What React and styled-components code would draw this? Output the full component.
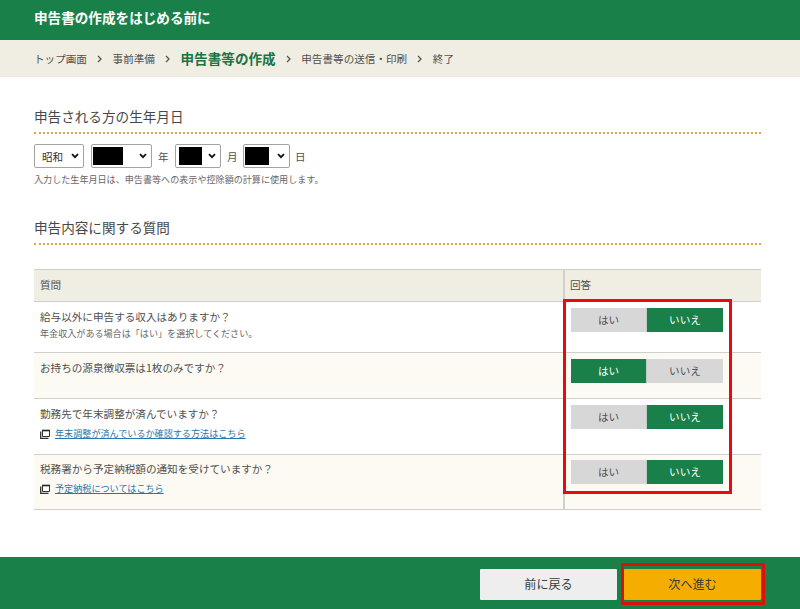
import React, { useState } from 'react';
import styled, { createGlobalStyle } from 'styled-components';

const GlobalStyle = createGlobalStyle`
  * {
    box-sizing: border-box;
  }
  body {
    margin: 0;
    background: #fff;
    color: #505050;
    font-family: "Noto Sans CJK JP", "Noto Sans", sans-serif;
    font-size: 10.6px;
    font-weight: 400;
  }
`;

const Page = styled.div`
  width: 800px;
  height: 609px;
  display: flex;
  flex-direction: column;
  overflow: hidden;
`;

const Header = styled.header`
  height: 40px;
  padding: 0 34px 6px;
  display: flex;
  align-items: center;
  background: #19804a;
`;

const Title = styled.h1`
  margin: 0;
  color: #fff;
  font-size: 13.6px;
  font-weight: 700;
  line-height: 20px;
`;

const Steps = styled.nav`
  height: 37px;
  padding: 0 34px;
  display: flex;
  align-items: center;
  background: #f0eee3;
`;

const Step = styled.span`
  padding-bottom: ${props => props.$current ? '2px' : 0};
  color: ${props => props.$current ? '#1a7443' : '#505050'};
  font-size: ${props => props.$current ? '13.6px' : '10.6px'};
  font-weight: ${props => props.$current ? 700 : 400};
  line-height: 20px;
`;

const StepArrow = styled.svg`
  width: 5px;
  height: 8px;
  margin: 1px 10.6px 0 10px;
`;

const Content = styled.main`
  flex: 1;
  padding: 0 39px 0 34px;
`;

const SectionTitle = styled.h2`
  height: ${props => props.$height};
  margin: 0;
  padding-bottom: 5px;
  display: flex;
  align-items: flex-end;
  border-bottom: 2px dotted #d9a93f;
  color: #484848;
  font-size: 13.6px;
  font-weight: 400;
  line-height: 22px;
`;

const BirthRow = styled.div`
  margin-top: 10px;
  display: flex;
  align-items: center;
`;

const SelectBox = styled.button`
  width: ${props => props.$width};
  height: 24px;
  padding: 0 4px 0 ${props => props.$left || '1px'};
  display: flex;
  align-items: center;
  justify-content: space-between;
  border: 1px solid #a3a3a3;
  border-radius: 2px;
  background: #fff;
  color: #333;
  font: inherit;
`;

const Mask = styled.span`
  width: ${props => props.$width};
  height: 18px;
  background: #000;
`;

const Unit = styled.span`
  width: ${props => props.$width};
  padding-left: ${props => props.$left || '6px'};
`;

const Note = styled.p`
  margin: 0;
  color: #666;
  font-size: 9.08px;
  line-height: ${props => props.$line || '16px'};
`;

const TableArea = styled.div`
  position: relative;
  margin-top: 24px;
`;

const Table = styled.div`
  border-top: 1px solid #cfcfcb;
`;

const Row = styled.div`
  height: ${props => props.$height};
  display: grid;
  grid-template-columns: 529px 1fr;
  border-bottom: 1px solid #cfcfcb;
  background: ${props => props.$bg || '#fff'};
`;

const HeadCell = styled.div`
  padding: 7px 6px 0;
  line-height: 16px;
  & + & {
    padding-left: 5px;
    border-left: 2px solid #cfcfcb;
  }
`;

const Question = styled.div`
  padding: ${props => props.$top || '7px'} 6px 0;
  line-height: 16px;
`;

const Answer = styled.div`
  padding: ${props => props.$top || '6px'} 6px 0;
  border-left: 2px solid #cfcfcb;
`;

const Choices = styled.div`
  width: 152px;
  display: flex;
  gap: 1px;
  background: #c4c9c4;
`;

const Choice = styled.button`
  width: ${props => props.$width};
  height: 24px;
  padding: 0;
  border: 0;
  background: ${props => props.$on ? '#19804a' : '#d7d7d7'};
  color: ${props => props.$on ? '#fff' : '#505050'};
  font: inherit;
  line-height: 24px;
`;

const HelpLine = styled.div`
  margin-top: 3px;
  display: flex;
  align-items: center;
  gap: 5px;
`;

const WindowIcon = styled.svg`
  width: 10px;
  height: 10px;
  margin-top: 2px;
`;

const HelpLink = styled.a`
  color: #2a76ab;
  font-size: 9.1px;
  line-height: 16px;
  text-decoration: underline;
  text-underline-offset: 1px;
`;

const Footer = styled.footer`
  height: 52px;
  padding: 12px 39px 0 0;
  display: flex;
  justify-content: flex-end;
  align-items: flex-start;
  gap: 7px;
  background: #19804a;
`;

const NavSlot = styled.div`
  position: relative;
`;

const NavButton = styled.button`
  width: 137px;
  height: 31px;
  padding: 0;
  display: block;
  border: 0;
  border-radius: 1px;
  background: ${props => props.$primary ? '#f5ae00' : '#eee'};
  color: #3a3a3a;
  font: inherit;
  font-size: 12.1px;
  line-height: 29px;
  padding-bottom: 2px;
`;

// red outline laid over the parts the guide points at
const Marker = styled.div`
  position: absolute;
  top: ${props => props.$top};
  left: ${props => props.$left};
  width: ${props => props.$width};
  height: ${props => props.$height};
  border: 3px solid ${props => props.$color || '#e80a0d'};
  pointer-events: none;
`;

const steps = ['トップ画面', '事前準備', '申告書等の作成', '申告書等の送信・印刷', '終了'];

const questions = [
  { text: '給与以外に申告する収入はありますか？', note: '年金収入がある場合は「はい」を選択してください。', height: '51px' },
  { text: 'お持ちの源泉徴収票は1枚のみですか？', height: '46px', bg: '#fcfaf3' },
  { text: '勤務先で年末調整が済んでいますか？', link: '年末調整が済んでいるか確認する方法はこちら', height: '56px' },
  { text: '税務署から予定納税額の通知を受けていますか？', link: '予定納税についてはこちら', height: '55px', bg: '#fcfaf3', top: '6px', answerTop: '5px' },
];

const Chevron = () => (
  <svg width="8" height="6" viewBox="0 0 8 6">
    <path d="M1 1.2 4 4.2 7 1.2" fill="none" stroke="#111" strokeWidth="1.8" />
  </svg>
);

const App = () => {
  const [answers, setAnswers] = useState([false, true, false, false]);

  const choose = (index, value) => {
    setAnswers(answers.map((a, i) => (i === index ? value : a)));
  };

  return (
    <>
      <GlobalStyle />
      <Page>
        <Header>
          <Title>申告書の作成をはじめる前に</Title>
        </Header>
        <Steps>
          {steps.map((step, i) => (
            <React.Fragment key={step}>
              {i > 0 && (
                <StepArrow viewBox="0 0 5 8">
                  <path d="M1 1 4 4 1 7" fill="none" stroke="#555" strokeWidth="1.3" />
                </StepArrow>
              )}
              <Step $current={i === 2}>{step}</Step>
            </React.Fragment>
          ))}
        </Steps>
        <Content>
          <SectionTitle $height="57px">申告される方の生年月日</SectionTitle>
          <BirthRow>
            <SelectBox $width="50px" $left="7px">昭和<Chevron /></SelectBox>
            <Unit $width="7px" />
            <SelectBox $width="61px"><Mask $width="30px" /><Chevron /></SelectBox>
            <Unit $width="23px">年</Unit>
            <SelectBox $width="46px" $left="3px"><Mask $width="23px" /><Chevron /></SelectBox>
            <Unit $width="22px">月</Unit>
            <SelectBox $width="47px"><Mask $width="24px" /><Chevron /></SelectBox>
            <Unit $width="20px" $left="5px">日</Unit>
          </BirthRow>
          <Note $line="23px">入力した生年月日は、申告書等への表示や控除額の計算に使用します。</Note>
          <SectionTitle $height="54px">申告内容に関する質問</SectionTitle>
          <TableArea>
            <Table>
              <Row $height="32px" $bg="#f0eee3">
                <HeadCell>質問</HeadCell>
                <HeadCell>回答</HeadCell>
              </Row>
              {questions.map((q, i) => (
                <Row key={q.text} $height={q.height} $bg={q.bg}>
                  <Question $top={q.top}>
                    {q.text}
                    {q.note && <Note>{q.note}</Note>}
                    {q.link && (
                      <HelpLine>
                        <WindowIcon viewBox="0 0 10 10">
                          <path d="M2.5 1.5h7v6h-7z" fill="#fff" stroke="#333" />
                          <path d="M2 1.5h8" stroke="#222" strokeWidth="1.6" />
                          <path d="M.7 2.5v6.8H8.5" fill="none" stroke="#333" strokeWidth="1.3" />
                        </WindowIcon>
                        <HelpLink>{q.link}</HelpLink>
                      </HelpLine>
                    )}
                  </Question>
                  <Answer $top={q.answerTop}>
                    <Choices>
                      <Choice $width="75px" $on={answers[i]} onClick={() => choose(i, true)}>はい</Choice>
                      <Choice $width="76px" $on={!answers[i]} onClick={() => choose(i, false)}>いいえ</Choice>
                    </Choices>
                  </Answer>
                </Row>
              ))}
            </Table>
            <Marker $top="30px" $left="529px" $width="169px" $height="195px" />
          </TableArea>
        </Content>
        <Footer>
          <NavSlot>
            <NavButton>前に戻る</NavButton>
          </NavSlot>
          <NavSlot>
            <NavButton $primary>次へ進む</NavButton>
            <Marker $top="-6px" $left="-3px" $width="144px" $height="42px" $color="#da1209" />
          </NavSlot>
        </Footer>
      </Page>
    </>
  );
};

export default App;
